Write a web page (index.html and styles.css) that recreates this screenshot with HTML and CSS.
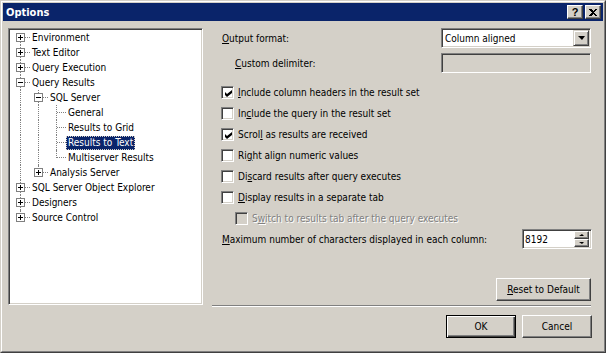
FILE: index.html
```html
<!DOCTYPE html>
<html lang="en">
<head>
    <meta charset="UTF-8">
    <title>Options</title>
    <link rel="stylesheet" href="styles.css">
</head>
<body>
    <div class="window">
        <div class="frame">
            <!-- Title bar -->
            <div class="titlebar">
                <span class="title">Options</span>
                <div class="caption-buttons">
                    <span class="cap-btn">?</span>
                    <span class="cap-btn">
                        <svg width="8" height="7" viewBox="0 0 8 7" shape-rendering="crispEdges"><path d="M0 0h2l2 2 2-2h2L5 3.5 8 7H6L4 5 2 7H0l3-3.5z" fill="#000"/></svg>
                    </span>
                </div>
            </div>

            <div class="content">
                <!-- Tree -->
                <div class="tree">
                    <div class="node"><span class="ln first"><span class="box plus"></span></span><span class="label">Environment</span></div>
                    <div class="node"><span class="ln tee"><span class="box plus"></span></span><span class="label">Text Editor</span></div>
                    <div class="node"><span class="ln tee"><span class="box plus"></span></span><span class="label">Query Execution</span></div>
                    <div class="node"><span class="ln tee"><span class="box"></span></span><span class="label">Query Results</span></div>
                    <div class="node"><span class="ln v"></span><span class="ln tee"><span class="box"></span></span><span class="label">SQL Server</span></div>
                    <div class="node"><span class="ln v"></span><span class="ln v"></span><span class="ln tee"></span><span class="label">General</span></div>
                    <div class="node"><span class="ln v"></span><span class="ln v"></span><span class="ln tee"></span><span class="label">Results to Grid</span></div>
                    <div class="node"><span class="ln v"></span><span class="ln v"></span><span class="ln tee"></span><span class="label selected">Results to Text</span></div>
                    <div class="node"><span class="ln v"></span><span class="ln v"></span><span class="ln elbow"></span><span class="label">Multiserver Results</span></div>
                    <div class="node"><span class="ln v"></span><span class="ln elbow"><span class="box plus"></span></span><span class="label">Analysis Server</span></div>
                    <div class="node"><span class="ln tee"><span class="box plus"></span></span><span class="label">SQL Server Object Explorer</span></div>
                    <div class="node"><span class="ln tee"><span class="box plus"></span></span><span class="label">Designers</span></div>
                    <div class="node"><span class="ln elbow"><span class="box plus"></span></span><span class="label">Source Control</span></div>
                </div>

                <!-- Options panel -->
                <div class="panel">
                    <div class="field-row">
                        <span><u>O</u>utput format:</span>
                        <div class="combo">
                            <span class="combo-text">Column aligned</span>
                            <span class="drop-btn"><span class="arrow-down"></span></span>
                        </div>
                    </div>
                    <div class="field-row sub">
                        <span><u>C</u>ustom delimiter:</span>
                        <div class="textbox disabled"></div>
                    </div>

                    <div class="checks">
                        <label class="check"><span class="cb checked"></span><span><u>I</u>nclude column headers in the result set</span></label>
                        <label class="check"><span class="cb"></span><span>In<u>c</u>lude the query in the result set</span></label>
                        <label class="check"><span class="cb checked"></span><span>Scrol<u>l</u> as results are received</span></label>
                        <label class="check"><span class="cb"></span><span>Ri<u>g</u>ht align numeric values</span></label>
                        <label class="check"><span class="cb"></span><span>Di<u>s</u>card results after query executes</span></label>
                        <label class="check"><span class="cb"></span><span><u>D</u>isplay results in a separate tab</span></label>
                        <label class="check sub off"><span class="cb disabled"></span><span>S<u>w</u>itch to results tab after the query executes</span></label>
                    </div>

                    <div class="field-row max">
                        <span><u>M</u>aximum number of characters displayed in each column:</span>
                        <div class="spin">
                            <span class="spin-text">8192</span>
                            <span class="spin-btns">
                                <span class="spin-btn"><span class="arrow-up small"></span></span>
                                <span class="spin-btn"><span class="arrow-down small"></span></span>
                            </span>
                        </div>
                    </div>

                    <div class="reset-row">
                        <button class="btn reset"><u>R</u>eset to Default</button>
                    </div>
                    <div class="separator"></div>
                </div>
            </div>

            <div class="footer">
                <button class="btn default">OK</button>
                <button class="btn">Cancel</button>
            </div>
        </div>
    </div>
</body>
</html>
```

FILE: styles.css
```css
* {
    margin: 0;
    padding: 0;
    box-sizing: border-box;
}

body {
    font-family: "DejaVu Sans Condensed", "DejaVu Sans", sans-serif;
    font-size: 10px;
    color: #000;
    background: #d4d0c8;
}

.window {
    width: 606px;
    height: 353px;
    border: 1px solid;
    border-color: #d4d0c8 #404040 #404040 #d4d0c8;
    background: #d4d0c8;
}

.frame {
    height: 100%;
    border: 1px solid;
    border-color: #fff #808080 #808080 #fff;
    padding: 1px;
    display: flex;
    flex-direction: column;
}

/* title bar */
.titlebar {
    height: 18px;
    background: #0a246a;
    display: flex;
    align-items: center;
    justify-content: space-between;
    padding: 0 2px 0 3px;
}

.title {
    color: #fff;
    font-weight: bold;
    font-size: 11px;
}

.caption-buttons {
    display: flex;
    gap: 2px;
}

.cap-btn {
    width: 16px;
    height: 14px;
    background: #d4d0c8;
    border: 1px solid;
    border-color: #fff #404040 #404040 #fff;
    box-shadow: inset -1px -1px #808080;
    display: flex;
    align-items: center;
    justify-content: center;
    font-weight: bold;
    font-size: 11px;
    font-family: "Liberation Sans", sans-serif;
}

/* main area */
.content {
    display: flex;
    align-items: flex-start;
    padding: 7px 12px 0 5px;
}

.tree {
    width: 195px;
    height: 277px;
    background: #fff;
    border: 1px solid;
    border-color: #808080 #fff #fff #808080;
    box-shadow: inset 1px 1px #404040, inset -1px -1px #d4d0c8;
    padding: 1px 0 0 3px;
    flex-shrink: 0;
}

.node {
    display: flex;
    align-items: center;
    height: 15px;
}

.ln {
    position: relative;
    width: 18px;
    height: 15px;
    flex-shrink: 0;
}

.ln::before {
    content: "";
    position: absolute;
    left: 8px;
    top: 0;
    bottom: 0;
    border-left: 1px dotted #808080;
}

.ln.first::before {
    top: 7px;
}

.ln.elbow::before {
    bottom: 7px;
}

.ln.tee::after,
.ln.elbow::after,
.ln.first::after {
    content: "";
    position: absolute;
    left: 9px;
    right: 0;
    top: 7px;
    border-top: 1px dotted #808080;
}

.box {
    position: absolute;
    left: 4px;
    top: 3px;
    width: 9px;
    height: 9px;
    background: #fff;
    border: 1px solid #808080;
    z-index: 1;
}

.box::before {
    content: "";
    position: absolute;
    left: 1px;
    top: 3px;
    width: 5px;
    height: 1px;
    background: #000;
}

.box.plus::after {
    content: "";
    position: absolute;
    left: 3px;
    top: 1px;
    width: 1px;
    height: 5px;
    background: #000;
}

.label {
    padding: 0 2px;
    line-height: 14px;
    white-space: nowrap;
}

.label.selected {
    background: #0a246a;
    color: #fff;
    outline: 1px dotted #d4d0c8;
    outline-offset: -1px;
}

/* right panel */
.panel {
    flex: 1;
    margin-left: 18px;
    height: 279px;
    display: flex;
    flex-direction: column;
}

.field-row {
    display: flex;
    align-items: center;
    justify-content: space-between;
    padding-left: 1px;
    height: 20px;
}

.field-row.sub {
    margin-top: 5px;
    padding-left: 14px;
}

.combo,
.textbox,
.spin {
    border: 1px solid;
    border-color: #808080 #fff #fff #808080;
    box-shadow: inset 1px 1px #404040, inset -1px -1px #d4d0c8;
    background: #fff;
    height: 20px;
    display: flex;
    align-items: center;
}

.combo,
.textbox {
    width: 150px;
}

.textbox.disabled {
    background: #d4d0c8;
}

.combo-text {
    flex: 1;
    padding-left: 3px;
}

.drop-btn {
    width: 16px;
    height: 16px;
    margin-right: 1px;
    background: #d4d0c8;
    border: 1px solid;
    border-color: #d4d0c8 #404040 #404040 #d4d0c8;
    box-shadow: inset 1px 1px #fff, inset -1px -1px #808080;
    display: flex;
    align-items: center;
    justify-content: center;
}

.arrow-down {
    width: 0;
    height: 0;
    border-left: 4px solid transparent;
    border-right: 3px solid transparent;
    border-top: 4px solid #000;
}

.arrow-up {
    width: 0;
    height: 0;
    border-left: 3px solid transparent;
    border-right: 2px solid transparent;
    border-bottom: 2px solid #000;
}

.arrow-down.small {
    border-left-width: 3px;
    border-right-width: 2px;
    border-top-width: 2px;
}

.checks {
    margin-top: 9px;
    display: flex;
    flex-direction: column;
}

.check {
    display: flex;
    align-items: center;
    gap: 4px;
    height: 21px;
}

.check.sub {
    padding-left: 14px;
}

.check.off {
    color: #808080;
    text-shadow: 1px 1px #fff;
}

.cb {
    width: 13px;
    height: 13px;
    border: 1px solid;
    border-color: #808080 #fff #fff #808080;
    box-shadow: inset 1px 1px #404040, inset -1px -1px #d4d0c8;
    background: #fff;
    position: relative;
    flex-shrink: 0;
}

.cb.disabled {
    background: #d4d0c8;
}

.cb.checked::after {
    content: "";
    position: absolute;
    left: 3px;
    top: 3px;
    width: 7px;
    height: 7px;
    background: #000;
    clip-path: polygon(0 28.6%, 28.6% 57.1%, 100% 0, 100% 42.9%, 28.6% 100%, 0 71.4%);
}

.field-row.max {
    margin-top: 0;
}

.spin {
    width: 70px;
    margin-right: -1px;
}

.spin-text {
    flex: 1;
    padding-left: 2px;
}

.spin-btns {
    display: flex;
    flex-direction: column;
    margin-right: 2px;
}

.spin-btn {
    width: 15px;
    height: 8px;
    background: #d4d0c8;
    border: 1px solid;
    border-color: #fff #404040 #404040 #fff;
    box-shadow: inset -1px -1px #808080;
    display: flex;
    align-items: center;
    justify-content: center;
}

.reset-row {
    margin-top: auto;
    display: flex;
    justify-content: flex-end;
}

.separator {
    margin: 4px 0 0 -9px;
    height: 2px;
    border-top: 1px solid #808080;
    border-bottom: 1px solid #fff;
}

/* buttons */
.btn {
    font-family: inherit;
    font-size: 10px;
    height: 23px;
    background: #d4d0c8;
    border: 1px solid;
    border-color: #fff #404040 #404040 #fff;
    box-shadow: inset -1px -1px #808080, inset 1px 1px #d4d0c8;
    color: #000;
}

.btn.reset {
    width: 95px;
}

.btn.default {
    border-color: #000;
    box-shadow: inset 1px 1px #fff, inset -1px -1px #404040, inset -2px -2px #808080;
}

.footer {
    display: flex;
    justify-content: flex-end;
    gap: 6px;
    padding: 8px 11px 0 0;
}

.footer .btn {
    width: 70px;
}
```
